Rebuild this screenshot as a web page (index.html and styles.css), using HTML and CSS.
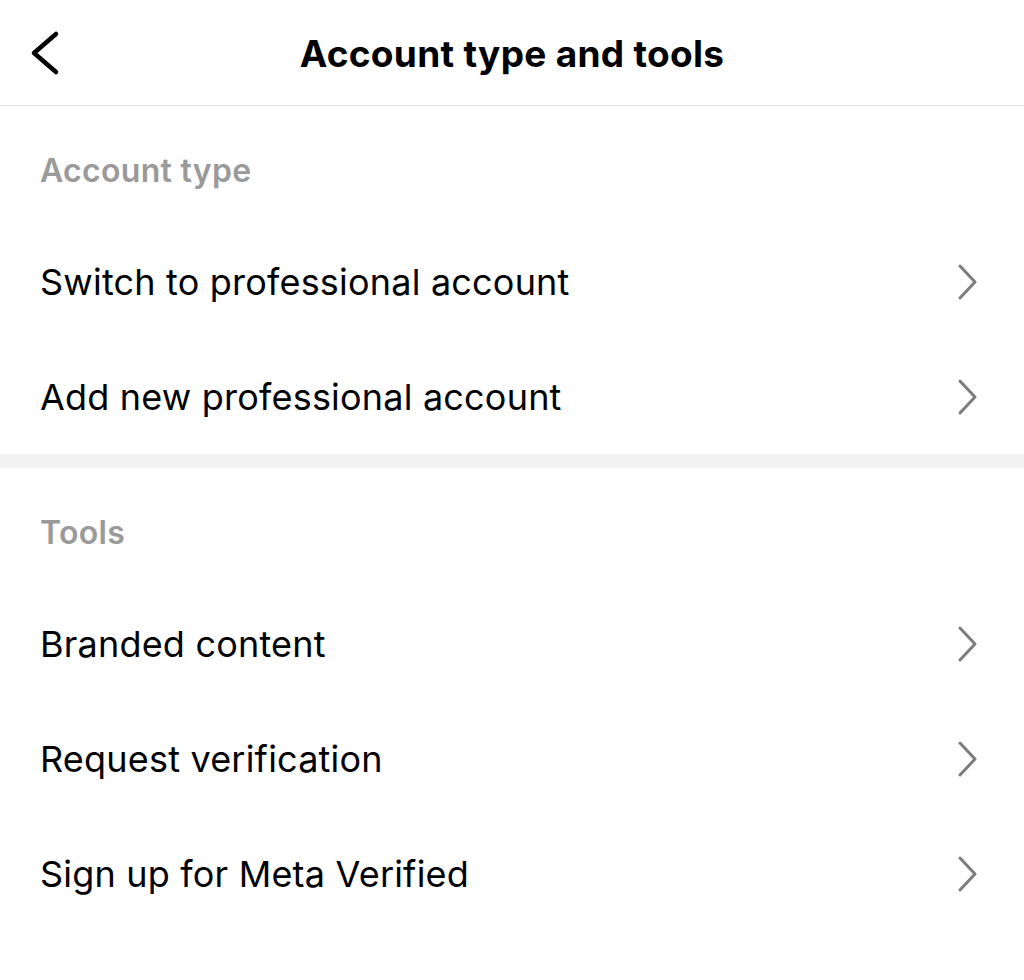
FILE: index.html
```html
<!DOCTYPE html>
<html lang="en">
<head>
<meta charset="utf-8">
<title>Account type and tools</title>
<link rel="stylesheet" href="styles.css">
</head>
<body>
<header class="topbar">
  <div class="topbar-left">
    <svg class="back-icon" width="40" height="52" viewBox="0 0 40 52" aria-hidden="true">
      <polyline points="30,7 8,26 30,45" fill="none" stroke="#000" stroke-width="4.5" stroke-linecap="round" stroke-linejoin="round"/>
    </svg>
  </div>
  <h1 class="title">Account type and tools</h1>
  <div class="topbar-right"></div>
</header>

<section class="group">
  <h2 class="group-title">Account type</h2>
  <div class="row"><span class="row-label">Switch to professional account</span><svg class="chev" width="22" height="38" viewBox="0 0 22 38" aria-hidden="true"><polyline points="3,3 18,19 3,35" fill="none" stroke="#7d7d7d" stroke-width="3" stroke-linecap="round" stroke-linejoin="round"/></svg></div>
  <div class="row"><span class="row-label">Add new professional account</span><svg class="chev" width="22" height="38" viewBox="0 0 22 38" aria-hidden="true"><polyline points="3,3 18,19 3,35" fill="none" stroke="#7d7d7d" stroke-width="3" stroke-linecap="round" stroke-linejoin="round"/></svg></div>
</section>

<div class="divider"></div>

<section class="group">
  <h2 class="group-title">Tools</h2>
  <div class="row"><span class="row-label">Branded content</span><svg class="chev" width="22" height="38" viewBox="0 0 22 38" aria-hidden="true"><polyline points="3,3 18,19 3,35" fill="none" stroke="#7d7d7d" stroke-width="3" stroke-linecap="round" stroke-linejoin="round"/></svg></div>
  <div class="row"><span class="row-label">Request verification</span><svg class="chev" width="22" height="38" viewBox="0 0 22 38" aria-hidden="true"><polyline points="3,3 18,19 3,35" fill="none" stroke="#7d7d7d" stroke-width="3" stroke-linecap="round" stroke-linejoin="round"/></svg></div>
  <div class="row"><span class="row-label">Sign up for Meta Verified</span><svg class="chev" width="22" height="38" viewBox="0 0 22 38" aria-hidden="true"><polyline points="3,3 18,19 3,35" fill="none" stroke="#7d7d7d" stroke-width="3" stroke-linecap="round" stroke-linejoin="round"/></svg></div>
</section>
</body>
</html>
```

FILE: styles.css
```css
html, body {
  margin: 0;
  padding: 0;
  background: #ffffff;
}

body {
  font-family: Inter, "Liberation Sans", Arial, sans-serif;
  color: #000;
  width: 1024px;
  height: 980px;
  overflow: hidden;
}

.topbar {
  display: grid;
  grid-template-columns: 1fr auto 1fr;
  align-items: center;
  box-sizing: border-box;
  height: 106px;
  border-bottom: 1px solid #e2e2e2;
}

.topbar-left {
  display: flex;
  align-items: center;
  padding-left: 26px;
}

.back-icon {
  display: block;
}

.title {
  margin: 0;
  padding-top: 2px;
  font-size: 37px;
  font-weight: 700;
  letter-spacing: 0.3px;
  text-align: center;
}

.group {
  display: flex;
  flex-direction: column;
}

.group-title {
  margin: 0;
  height: 118px;
  box-sizing: border-box;
  padding: 45px 40px 0;
  font-size: 32px;
  line-height: 40px;
  font-weight: 600;
  letter-spacing: 0.3px;
  color: #9a9a9a;
}

.row {
  display: flex;
  align-items: center;
  justify-content: space-between;
  height: 115px;
  padding: 0 45px 0 40px;
}

.row-label {
  font-size: 36px;
  font-weight: 400;
  letter-spacing: 0.2px;
}

.chev {
  display: block;
}

.divider {
  height: 14px;
  background: #f2f2f2;
}
```
